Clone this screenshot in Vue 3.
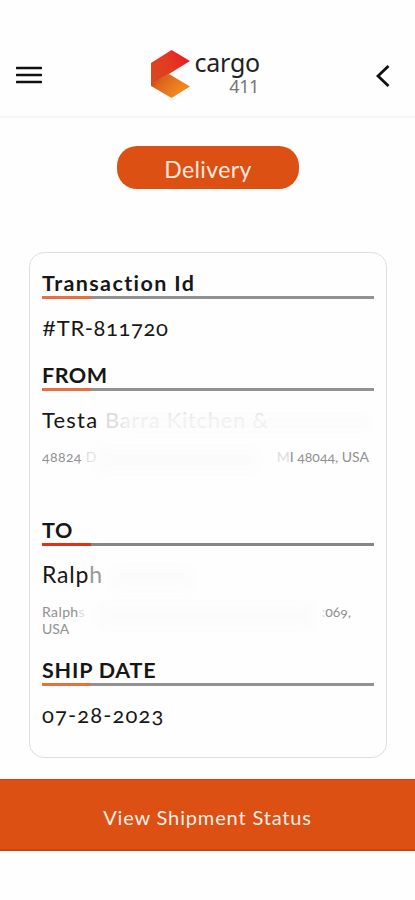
<template>
  <div class="app">
    <header>
      <button class="icon-btn menu-btn" aria-label="Menu">
        <svg width="26" height="18" viewBox="0 0 26 18">
          <path d="M1 2H25M1 9H25M1 16H25" stroke="#111" stroke-width="2.6" stroke-linecap="round" />
        </svg>
      </button>

      <div class="logo">
        <svg width="40" height="48" viewBox="0 0 40 48">
          <defs>
            <linearGradient id="logoTop" x1="0" y1="0.7" x2="1" y2="0.2">
              <stop offset="0" stop-color="#d94720" />
              <stop offset="0.5" stop-color="#e33a22" />
              <stop offset="1" stop-color="#ee1620" />
            </linearGradient>
            <linearGradient id="logoBottom" x1="0" y1="0" x2="0.8" y2="0.5">
              <stop offset="0" stop-color="#8f3a14" />
              <stop offset="0.4" stop-color="#dc641c" />
              <stop offset="1" stop-color="#f0851f" />
            </linearGradient>
          </defs>
          <path d="M1 34L19 24L40 36.5L21.5 48L1 36Z" fill="url(#logoBottom)" />
          <path d="M21.5 0L40 11L19 24L1 34.5V13Z" fill="url(#logoTop)" />
        </svg>
        <div class="logo-text">
          <span class="logo-name">cargo</span>
          <span class="logo-num">411</span>
        </div>
      </div>

      <button class="icon-btn back-btn" aria-label="Back">
        <svg width="14" height="22" viewBox="0 0 14 22">
          <path d="M12.5 1L2 11L12.5 21" fill="none" stroke="#111" stroke-width="2.8" />
        </svg>
      </button>
    </header>

    <main>
      <div class="pill"><span>Delivery</span></div>

      <section class="card">
        <div class="field field-id">
          <h2 class="t-id">Transaction Id</h2>
          <p class="value v-id"><span class="hash">#</span>TR-811720</p>
        </div>

        <div class="field field-from">
          <h2 class="t-from">FROM</h2>
          <p class="value v-from">Testa <span class="faded name-rest">Barra Kitchen &amp;</span></p>
          <p class="address split">
            <span class="street">48824 <span class="faded">D</span></span>
            <span class="addr-end"><span class="faded">M</span>I 48044, USA</span>
          </p>
          <i class="smudge smudge-a"></i>
          <i class="smudge smudge-b"></i>
        </div>

        <div class="field field-to">
          <h2 class="t-to">TO</h2>
          <p class="value v-to">Ralp<span class="fade-h">h</span></p>
          <p class="address split to-line">
            <span class="street">Ralph<span class="faded">s</span></span>
            <span class="zip"><span class="faded">:</span>069,</span>
          </p>
          <p class="address">USA</p>
          <i class="smudge smudge-c"></i>
          <i class="smudge smudge-d"></i>
        </div>

        <div class="field">
          <h2 class="t-date">SHIP DATE</h2>
          <p class="value v-date">07-28-2023</p>
        </div>
      </section>
    </main>

    <button class="status-btn"><span>View Shipment Status</span></button>
  </div>
</template>

<script setup>
</script>

<style>
body { margin: 0; background: #fefefe; }
</style>

<style scoped>
* { box-sizing: border-box; margin: 0; padding: 0; }
.app { height: 900px; display: flex; flex-direction: column; overflow: hidden;
       background: #fefefe; color: #171717; font-family: Lato, 'Open Sans', sans-serif;
       font-variant-numeric: oldstyle-nums; }

header { height: 118px; padding: 50px 25px 0 16px; display: flex; align-items: flex-start;
         justify-content: space-between; border-bottom: 2px solid #f6f6f6; }
.icon-btn { display: flex; background: none; border: none; cursor: pointer; }
.menu-btn { padding-top: 16px; }
.back-btn { padding-top: 15px; }

.logo { display: flex; gap: 4px; margin-right: 8px; }
.logo-text { width: 66px; display: flex; flex-direction: column; align-items: flex-end;
             font-family: 'Noto Sans', 'Open Sans', sans-serif; font-variant-numeric: normal; }
.logo-name { font-size: 25px; line-height: 25px; color: #222; letter-spacing: -.2px; }
.logo-num { font-size: 18px; line-height: 23px; color: #777; padding-right: 1px; letter-spacing: -.4px; }

main { padding: 28px 28px 0 29px; }
.pill { width: 182px; height: 43px; margin: 0 auto 63px 88px; border-radius: 20px;
        background: #dc5013; color: #ffe9df; display: flex; justify-content: center;
        font-size: 23px; line-height: 47px; letter-spacing: .4px; }

.card { height: 506px; padding: 12px 12px 0; border: 1.5px solid #dedede; border-radius: 15px; background: #fefefe; }

.field { position: relative; white-space: nowrap; }
.field-id { height: 92px; }
.field-from { height: 155px; }
.field-to { height: 140px; }
.field h2 { height: 34px; font-size: 21.5px; line-height: 37px; font-weight: 700;
            border-bottom: 3px solid;
            border-image: linear-gradient(to right, #e8703f 50px, #929292 50px) 1; }
.field h2.t-to { border-image: linear-gradient(to right, #e03018 50px, #858585 50px) 1; }

.value { padding-top: 14px; font-size: 22px; line-height: 29px; }
.address { font-size: 14px; line-height: 17px; color: #909090; font-weight: 400; }
.split { display: flex; justify-content: space-between; padding: 14px 5px 0 0; }
.to-line { padding: 14px 23px 0 0; }
.faded { color: #dcdcdc; }
.fade-h { color: #999; }
.hash { font-variant-numeric: lining-nums; }

.t-id { letter-spacing: 1.4px; }
.t-from, .t-to { letter-spacing: .5px; }
.t-date { letter-spacing: .8px; }
.v-id { letter-spacing: .6px; }
.v-from { letter-spacing: 1.2px; }
.name-rest { letter-spacing: .7px; }
.v-to { font-size: 23px; letter-spacing: .8px; }
.v-date { letter-spacing: 1.1px; }
.street { letter-spacing: .4px; }

/* soft patches over the private parts of the addresses */
.smudge { position: absolute; background: #fbfbfb; filter: blur(5px); opacity: .8; }
.smudge-a { left: 82px; top: 58px; width: 248px; height: 16px; }
.smudge-b { left: 54px; top: 90px; width: 165px; height: 26px; }
.smudge-c { left: 68px; top: 54px; width: 84px; height: 24px; }
.smudge-d { left: 54px; top: 90px; width: 218px; height: 28px; }

.status-btn { width: 100%; height: 72px; margin-top: 21px; flex: none; border: none;
              border-top: 1px solid #cb4211; border-bottom: 2px solid #cb3f10;
              background: #dc5013; color: #ffeee6; font-family: inherit; font-size: 20px;
              line-height: 74px; cursor: pointer; letter-spacing: .85px; }
</style>
